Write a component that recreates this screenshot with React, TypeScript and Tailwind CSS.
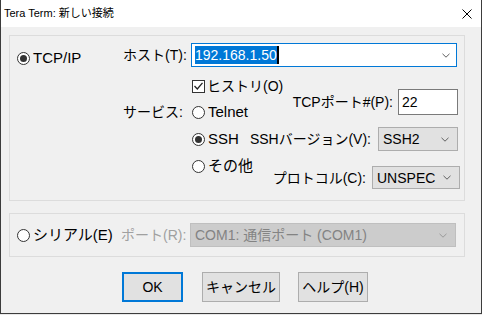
import React from "react";

const Radio: React.FC<{ checked?: boolean }> = ({ checked }) => (
    <span className="w-[13px] h-[13px] rounded-full border border-[#333333] bg-white flex items-center justify-center shrink-0">
        {checked && <span className="w-[7px] h-[7px] rounded-full bg-[#333333]" />}
    </span>
);

const Chevron: React.FC<{ color?: string }> = ({ color = "#606060" }) => (
    <svg width="8" height="5" viewBox="0 0 8 5" className="shrink-0">
        <polyline points="0.5,0.8 4,4.2 7.5,0.8" fill="none" stroke={color} strokeWidth="1" />
    </svg>
);

const App: React.FC = () => {
    return (
        <div className="w-[482px] h-[315px] bg-[#e9e9e9] text-black" style={{ fontFamily: '"Liberation Sans", "Noto Sans CJK JP", sans-serif' }}>
            <div className="w-[482px] h-[314px] border-x border-b border-[#3c3c3c] bg-[#f0f0f0] flex flex-col">
                {/* title bar */}
                <div className="h-[27px] bg-white flex items-center justify-between pl-[3px] pr-[9px] shrink-0">
                    <span className="text-[11px] leading-none">Tera Term: 新しい接続</span>
                    <svg width="10" height="10" viewBox="0 0 10 10">
                        <path d="M0.5 0.5 L9.5 9.5 M9.5 0.5 L0.5 9.5" stroke="#000" strokeWidth="1" />
                    </svg>
                </div>

                <div className="pl-[8px] flex flex-col text-[15px] leading-[20px]">
                    {/* TCP/IP group */}
                    <div className="mt-[8px] w-[456px] h-[166px] border border-[#dcdcdc] flex">
                        <div className="w-[113px] shrink-0 pl-[7px]">
                            <div className="mt-[12px] h-[20px] flex items-center gap-[3px]">
                                <Radio checked />
                                <span>TCP/IP</span>
                            </div>
                        </div>
                        <div className="flex-1 min-w-0 flex flex-col">
                            <div className="mt-[7px] h-[24px] flex items-center">
                                <span className="w-[68px] shrink-0 whitespace-nowrap text-[14px]">ホスト(T):</span>
                                <div className="w-[266px] shrink-0 h-[24px] border border-[#0078d7] bg-white flex items-center pl-[3px] pr-[6px]">
                                    <span className="bg-[#0078d7] text-white text-[14px] leading-[18px]">192.168.1.50</span>
                                    <span className="w-[2px] h-[18px] bg-black" />
                                    <span className="flex-1" />
                                    <Chevron />
                                </div>
                            </div>
                            <div className="flex">
                                <div className="w-[127px] shrink-0 flex flex-col whitespace-nowrap">
                                    <div className="mt-[9px] h-[20px] pl-[69px] flex items-center gap-[2px]">
                                        <span className="w-[13px] h-[13px] border border-[#333333] bg-white flex items-center justify-center shrink-0">
                                            <svg width="9" height="8" viewBox="0 0 9 8">
                                                <polyline points="0.5,4 3.3,7 8.5,0.8" fill="none" stroke="#222" strokeWidth="1.3" />
                                            </svg>
                                        </span>
                                        <span className="text-[14px]">ヒストリ(O)</span>
                                    </div>
                                    <div className="mt-[6px] h-[20px] flex items-center">
                                        <span className="w-[69px] shrink-0 text-[14px]">サービス:</span>
                                        <div className="flex items-center gap-[3px]">
                                            <Radio />
                                            <span>Telnet</span>
                                        </div>
                                    </div>
                                    <div className="mt-[7px] h-[20px] pl-[69px] flex items-center gap-[3px]">
                                        <Radio checked />
                                        <span>SSH</span>
                                    </div>
                                    <div className="mt-[7px] h-[20px] pl-[69px] flex items-center gap-[3px]">
                                        <Radio />
                                        <span>その他</span>
                                    </div>
                                </div>
                                <div className="flex-1 min-w-0 flex flex-col items-end whitespace-nowrap text-[14px]">
                                    <div className="mt-[22px] mr-[6px] flex items-center gap-[5px]">
                                        <span>TCPポート#(P):</span>
                                        <div className="w-[60px] shrink-0 h-[26px] border border-[#7a7a7a] bg-white flex items-center pl-[3px]">22</div>
                                    </div>
                                    <div className="mt-[12px] mr-[6px] flex items-center gap-[7px]">
                                        <span>SSHバージョン(V):</span>
                                        <div className="w-[80px] shrink-0 h-[24px] border border-[#adadad] bg-[#e1e1e1] flex items-center justify-between pl-[4px] pr-[8px]">
                                            <span>SSH2</span>
                                            <Chevron />
                                        </div>
                                    </div>
                                    <div className="mt-[15px] mr-[4px] flex items-center gap-[6px]">
                                        <span>プロトコル(C):</span>
                                        <div className="w-[88px] shrink-0 h-[23px] border border-[#adadad] bg-[#e1e1e1] flex items-center justify-between pl-[4px] pr-[8px]">
                                            <span>UNSPEC</span>
                                            <Chevron />
                                        </div>
                                    </div>
                                </div>
                            </div>
                        </div>
                    </div>

                    {/* serial group */}
                    <div className="mt-[12px] w-[456px] h-[44px] border border-[#dcdcdc] flex items-center whitespace-nowrap text-[14px]">
                        <div className="w-[111px] shrink-0 pl-[7px] flex items-center gap-[3px]">
                            <Radio />
                            <span className="text-[15px]">シリアル(E)</span>
                        </div>
                        <span className="w-[69px] shrink-0 text-[#a0a0a0]">ポート(R):</span>
                        <div className="w-[266px] shrink-0 h-[24px] border border-[#bfbfbf] bg-[#cccccc] flex items-center justify-between pl-[4px] pr-[8px] text-[#838383]">
                            <span>COM1: 通信ポート (COM1)</span>
                            <Chevron color="#9a9a9a" />
                        </div>
                    </div>

                    {/* buttons */}
                    <div className="mt-[15px] pl-[113px] flex items-center text-[14px]">
                        <button className="w-[61px] h-[30px] border-2 border-[#0078d7] bg-[#e1e1e1]">OK</button>
                        <button className="ml-[19px] w-[78px] h-[30px] border border-[#adadad] bg-[#e1e1e1]">キャンセル</button>
                        <button className="ml-[18px] w-[70px] h-[30px] border border-[#adadad] bg-[#e1e1e1]">ヘルプ(H)</button>
                    </div>
                </div>
            </div>
        </div>
    );
};

export default App;
